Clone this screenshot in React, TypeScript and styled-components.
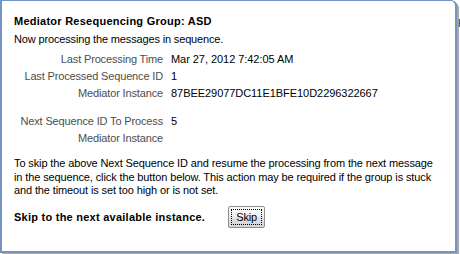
import React from "react";
import styled, { createGlobalStyle } from "styled-components";

const Global = createGlobalStyle`
  html, body { margin: 0; padding: 0; background: #ffffff; }
  body { font-family: "Liberation Sans", Arial, sans-serif; font-size: 11px; color: #000; }
`;

const Page = styled.div`
  display: flex;
  align-items: flex-start;
  width: 460px;
  height: 254px;
  overflow: hidden;
`;

const Panel = styled.section`
  box-sizing: border-box;
  flex: 0 0 457px;
  height: 253px;
  background: #ffffff;
  border: 2px solid #7393c2;
  border-top-width: 1px;
  border-top-right-radius: 6px;
  box-shadow: 2px 2px 0 #a9a9a9;
  padding: 13px 0 0 12px;
  display: flex;
  flex-direction: column;
`;

const Peek = styled.div`
  flex: 0 0 3px;
  overflow: hidden;
  padding-top: 17px;
  font-size: 11px;
  color: #1d3b6e;
  white-space: nowrap;
  text-indent: 1px;
`;

const Title = styled.h1`
  margin: 0;
  font-size: 11px;
  line-height: 14px;
  font-weight: bold;
  letter-spacing: 0.25px;
`;

const Intro = styled.p`
  margin: 4px 0 0;
  line-height: 14px;
  letter-spacing: -0.15px;
`;

const Form = styled.dl`
  margin: 5px 0 0;
  display: grid;
  grid-template-columns: 149px auto;
  column-gap: 8px;
  align-items: center;
`;

const Label = styled.dt`
  margin: 0;
  line-height: 17px;
  text-align: right;
  color: #4d4d4d;
  letter-spacing: -0.15px;
  white-space: nowrap;
`;

const Value = styled.dd`
  margin: 0;
  line-height: 17px;
  min-height: 17px;
  letter-spacing: -0.05px;
  white-space: nowrap;
`;

const Spacer = styled.div<{ $h: number }>`
  grid-column: 1 / -1;
  height: ${(p) => p.$h}px;
`;

const Note = styled.p`
  margin: 10px 0 0;
  line-height: 13.5px;
  letter-spacing: -0.12px;
  white-space: nowrap;
`;

const SkipRow = styled.div`
  margin-top: 8px;
  display: flex;
  align-items: center;
  gap: 23px;
`;

const SkipText = styled.strong`
  font-weight: bold;
  letter-spacing: 0.25px;
`;

const Button = styled.button`
  box-sizing: border-box;
  width: 37px;
  height: 22px;
  padding: 2px;
  border: 1px solid #8e8f8f;
  border-radius: 2px;
  background: linear-gradient(#fbfbfb 0%, #f1f1f1 45%, #e1e1e1 55%, #d4d4d4 100%);
  font-family: "Liberation Sans", Arial, sans-serif;
  font-size: 11px;
  color: #000;
  display: flex;
  align-items: stretch;
  justify-content: stretch;
  cursor: pointer;
`;

const Focus = styled.span`
  flex: 1;
  border: 1px dotted #000;
  display: flex;
  align-items: center;
  justify-content: center;
  letter-spacing: -0.15px;
`;

type Row = { label: string; value: string };

const top: Row[] = [
  { label: "Last Processing Time", value: "Mar 27, 2012 7:42:05 AM" },
  { label: "Last Processed Sequence ID", value: "1" },
  { label: "Mediator Instance", value: "87BEE29077DC11E1BFE10D2296322667" },
];

const next: Row[] = [
  { label: "Next Sequence ID To Process", value: "5" },
  { label: "Mediator Instance", value: "" },
];

export default function App() {
  return (
    <>
      <Global />
      <Page>
        <Panel>
          <Title>Mediator Resequencing Group: ASD</Title>
          <Intro>Now processing the messages in sequence.</Intro>
          <Form>
            {top.map((r) => (
              <React.Fragment key={r.label + r.value}>
                <Label>{r.label}</Label>
                <Value>{r.value}</Value>
              </React.Fragment>
            ))}
            <Spacer $h={11} />
            {next.map((r) => (
              <React.Fragment key={r.label + "n"}>
                <Label>{r.label}</Label>
                <Value>{r.value}</Value>
              </React.Fragment>
            ))}
          </Form>
          <Note>
            To skip the above Next Sequence ID and resume the processing from the next message
            <br />
            in the sequence, click the button below. This action may be required if the group is stuck
            <br />
            and the timeout is set too high or is not set.
          </Note>
          <SkipRow>
            <SkipText>Skip to the next available instance.</SkipText>
            <Button type="button">
              <Focus>Skip</Focus>
            </Button>
          </SkipRow>
        </Panel>
        <Peek>Help</Peek>
      </Page>
    </>
  );
}
